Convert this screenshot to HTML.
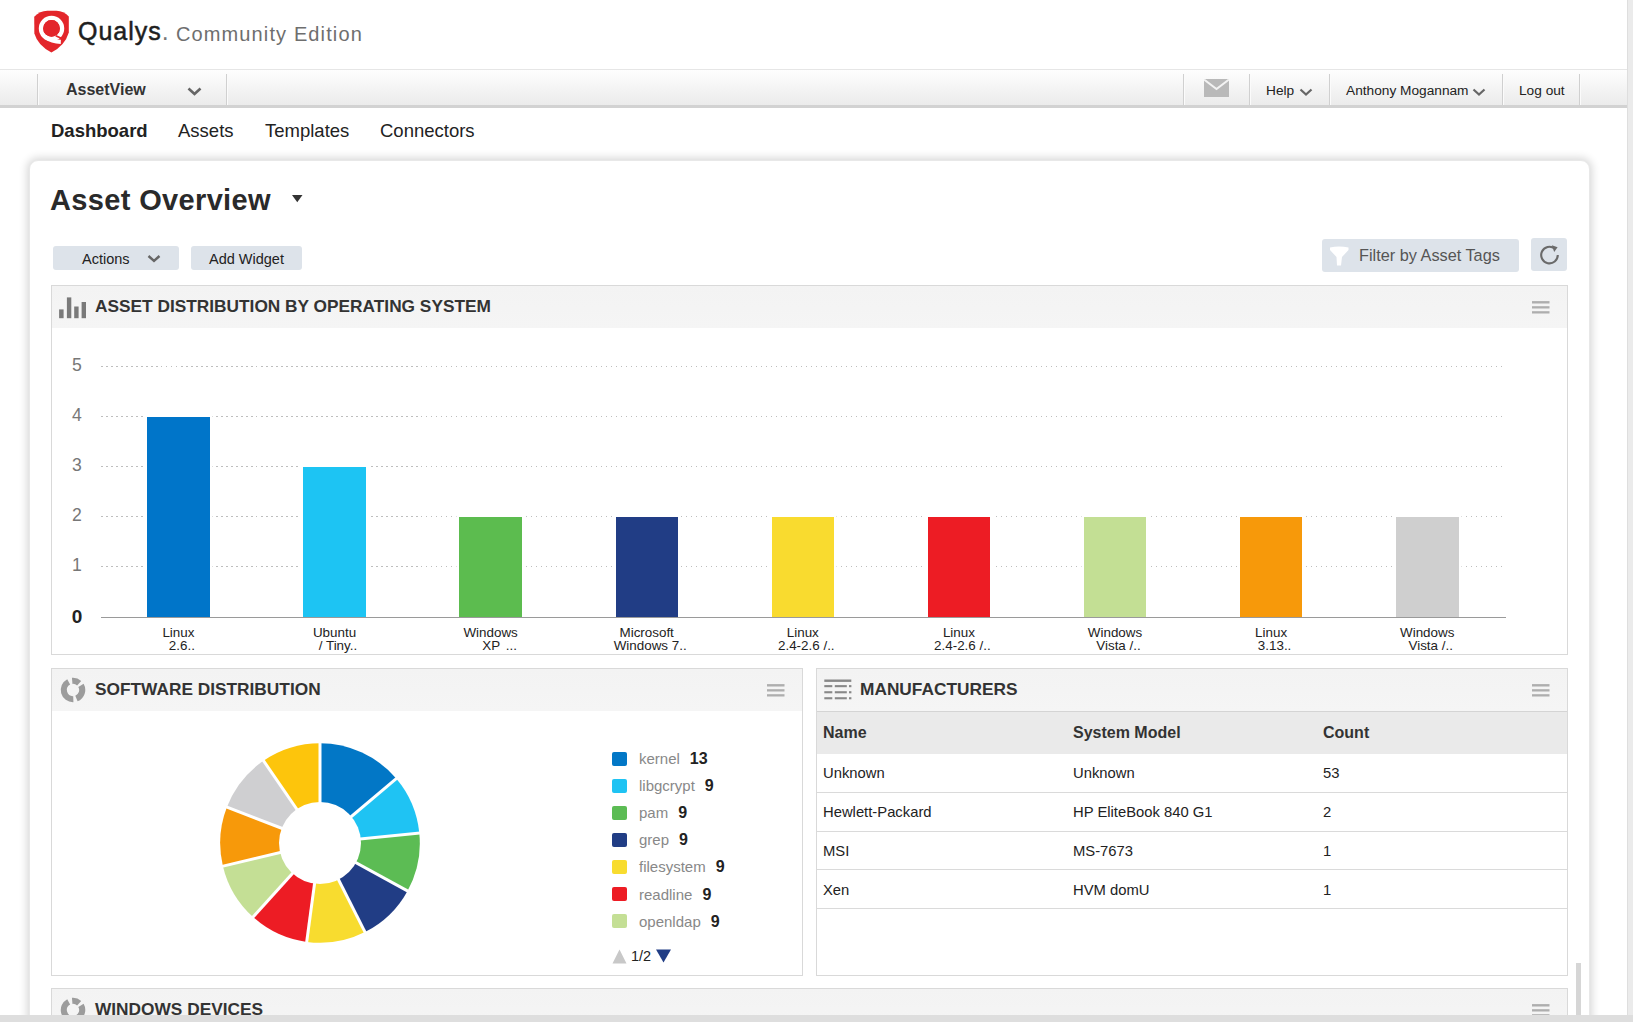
<!DOCTYPE html>
<html><head><meta charset="utf-8">
<style>
*{margin:0;padding:0;box-sizing:border-box}
html,body{width:1633px;height:1022px;overflow:hidden;background:#fff;font-family:"Liberation Sans",sans-serif;color:#333}
.abs{position:absolute}
#vscroll{position:absolute;left:1627px;top:0;width:6px;height:1022px;background:#ebebeb;border-left:1px solid #dedede}
#hscroll{position:absolute;left:0;top:1015px;width:1633px;height:7px;background:#dedede}
.brand{position:absolute;left:78px;top:17px;font-size:25px;color:#1e1e1e;letter-spacing:1px;-webkit-text-stroke:0.5px #1e1e1e;line-height:normal}
.brand span{color:#777;-webkit-text-stroke:0}
.edition{position:absolute;left:176px;top:23px;font-size:20px;color:#6e6e6e;letter-spacing:1.12px}
#nav{position:absolute;left:0;top:69px;width:1627px;height:39px;background:linear-gradient(#fefefe,#ebebeb);border-top:1px solid #e6e6e6;border-bottom:3px solid #d2d2d2}
.sep{position:absolute;top:4px;width:2px;height:31px;border-left:1px solid #d0d0d0;border-right:1px solid #fbfbfb}
.navt{position:absolute;font-size:13.7px;color:#222;top:13px}
.subnav{position:absolute;top:120px;font-size:18.5px;color:#222}
#card{position:absolute;left:29px;top:160px;width:1561px;height:900px;background:#fff;border-radius:9px;box-shadow:0 0 9px 2px rgba(0,0,0,0.16);border:1px solid #e8e8e8}
.panel{position:absolute;border:1px solid #d9d9d9;background:#fff}
.ph{position:absolute;left:0;top:0;right:0;height:42px;background:linear-gradient(#f3f3f3,#f5f5f5)}
.pt{position:absolute;left:43px;top:9.5px;font-size:17.3px;font-weight:bold;color:#333}
.ham{position:absolute;width:17.5px;height:12.5px;border-top:2.3px solid #b0b0b0;border-bottom:2.3px solid #b0b0b0}
.ham:after{content:"";position:absolute;left:0;right:0;top:2.9px;height:2.3px;background:#b0b0b0}
.btn{position:absolute;background:#dde3ea;border-radius:3px;font-size:14.5px;color:#222}
.bar{position:absolute;width:62.6px;box-shadow:0 0 0 2.5px #fff}
.grid{position:absolute;left:101px;width:1405px;height:1px;background:repeating-linear-gradient(90deg,#bebebe 0 1.5px,transparent 1.5px 5px)}
.yl{position:absolute;left:60px;width:34px;text-align:center;font-size:17.6px;color:#777}
.xl{position:absolute;width:120px;text-align:center;font-size:13.4px;line-height:13.5px;color:#222}
.lsq{position:absolute;left:612px;width:15px;height:14px;border-radius:2px}
.lt{position:absolute;left:639px;font-size:15px;color:#888;white-space:nowrap}
.lt b{color:#222;margin-left:10px;font-size:16px}
.th{position:absolute;font-size:16px;font-weight:bold;color:#333;margin-top:1px}
.td{position:absolute;font-size:14.8px;color:#222;margin-top:0.7px}
.rl{position:absolute;left:0;right:0;height:1px;background:#dadada}
</style></head><body>
<div id="vscroll"></div>

<!-- logo -->
<svg class="abs" style="left:28px;top:6px" width="48" height="52" viewBox="0 0 943 1022">
  <path d="M122 210 Q230 100 380 95 L560 95 Q700 100 802 205 L802 520 Q730 770 460 915 Q190 770 125 540 Z" fill="#e3262b"/>
  <circle cx="462" cy="440" r="207" fill="none" stroke="#fff" stroke-width="86"/>
  <path d="M343 610 Q466 700 645 705" fill="none" stroke="#fff" stroke-width="80"/>
  <path d="M545 585 L720 665" stroke="#e3262b" stroke-width="34"/>
  <circle cx="462" cy="440" r="164" fill="#e3262b"/>
</svg>
<div class="brand">Qualys<span>.</span></div>
<div class="edition">Community Edition</div>

<!-- nav -->
<div id="nav">
  <div class="sep" style="left:37px"></div>
  <div class="abs" style="left:66px;top:11px;font-size:16px;font-weight:bold;color:#333">AssetView</div>
  <svg class="abs" style="left:187px;top:17px" width="15" height="10"><path d="M1.5 1.5 L7.5 7 L13.5 1.5" stroke="#666" stroke-width="2.6" fill="none"/></svg>
  <div class="sep" style="left:226px"></div>
  <div class="sep" style="left:1183px"></div>
  <svg class="abs" style="left:1204px;top:9px" width="25" height="19" viewBox="0 0 25 19"><rect x="0" y="0" width="25" height="18" fill="#b9b9b9"/><path d="M0 0.5 L12.5 10 L25 0.5" stroke="#f3f3f3" stroke-width="2" fill="none"/></svg>
  <div class="sep" style="left:1249px"></div>
  <div class="navt" style="left:1266px">Help</div>
  <svg class="abs" style="left:1299px;top:18px" width="15" height="8"><path d="M1.5 1.5 L7 6.5 L12.5 1.5" stroke="#666" stroke-width="2.2" fill="none"/></svg>
  <div class="sep" style="left:1329px"></div>
  <div class="navt" style="left:1346px">Anthony Mogannam</div>
  <svg class="abs" style="left:1472px;top:18px" width="15" height="8"><path d="M1.5 1.5 L7 6.5 L12.5 1.5" stroke="#666" stroke-width="2.2" fill="none"/></svg>
  <div class="sep" style="left:1502px"></div>
  <div class="navt" style="left:1519px">Log out</div>
  <div class="sep" style="left:1579px"></div>
</div>

<div class="subnav" style="left:51px;font-weight:bold">Dashboard</div>
<div class="subnav" style="left:178px">Assets</div>
<div class="subnav" style="left:265px">Templates</div>
<div class="subnav" style="left:380px">Connectors</div>

<div id="card"></div>

<div class="abs" style="left:50px;top:184px;font-size:29px;font-weight:bold;color:#2a2a2a;letter-spacing:0.35px">Asset Overview</div>
<svg class="abs" style="left:292px;top:195px" width="11" height="8"><path d="M0 0 L10.5 0 L5.25 7.2 Z" fill="#333"/></svg>

<div class="btn" style="left:53px;top:246px;width:126px;height:24px"><span class="abs" style="left:29px;top:5px">Actions</span>
  <svg class="abs" style="left:94px;top:9px" width="14" height="8"><path d="M1.5 1 L7 6 L12.5 1" stroke="#666" stroke-width="2.4" fill="none"/></svg></div>
<div class="btn" style="left:191px;top:246px;width:111px;height:24px"><span class="abs" style="left:18px;top:5px">Add Widget</span></div>

<div class="btn" style="left:1322px;top:239px;width:197px;height:33px;font-size:16.3px;color:#555"><span class="abs" style="left:37px;top:7px">Filter by Asset Tags</span>
  <svg class="abs" style="left:7px;top:7px" width="21" height="21" viewBox="0 0 21 21"><path d="M1 1.5 Q10 -0.5 19.5 1.5 L19.5 4 L13 11 L12 19.5 L8 19.5 L7.5 11 L1 4 Z" fill="#fff"/></svg></div>
<div class="btn" style="left:1531px;top:238px;width:36px;height:33px">
  <svg class="abs" style="left:8px;top:6px" width="22" height="22" viewBox="0 0 22 22"><path d="M15.6 4.5 A8.3 8.3 0 1 0 18.8 11" stroke="#6a6a6a" stroke-width="2.1" fill="none"/><path d="M12.8 1.2 L18.6 3.2 L15.2 8 Z" fill="#6a6a6a"/></svg></div>

<!-- panel 1 -->
<div class="panel" style="left:51px;top:285px;width:1517px;height:370px">
  <div class="ph"></div>
  <svg class="abs" style="left:6px;top:11px" width="28" height="22"><rect x="1.1" y="12.4" width="4.5" height="8.8" fill="#7a7a7a"/><rect x="8.9" y="0.4" width="4.4" height="20.8" fill="#7a7a7a"/><rect x="16.2" y="9.5" width="4.4" height="11.7" fill="#7a7a7a"/><rect x="23.6" y="5" width="4.5" height="16.2" fill="#7a7a7a"/></svg>
  <div class="pt">ASSET DISTRIBUTION BY OPERATING SYSTEM</div>
  <svg class="abs" style="left:1480px;top:15px" width="18" height="13"><g fill="#aeaeae"><rect x="0" y="0.1" width="17.5" height="2.4"/><rect x="0" y="5.2" width="17.5" height="2.3"/><rect x="0" y="10.2" width="17.5" height="2.3"/></g></svg>
</div>
<div class="abs" style="left:0;top:0">
<div class="grid" style="top:566.4px"></div>
<div class="yl" style="top:554.9px">1</div>
<div class="grid" style="top:516.3px"></div>
<div class="yl" style="top:504.8px">2</div>
<div class="grid" style="top:466.2px"></div>
<div class="yl" style="top:454.7px">3</div>
<div class="grid" style="top:416.1px"></div>
<div class="yl" style="top:404.6px">4</div>
<div class="grid" style="top:366.0px"></div>
<div class="yl" style="top:354.5px">5</div>

<div class="yl" style="top:605.5px;font-weight:bold;color:#222;font-size:19px">0</div>
<div class="bar" style="left:147.2px;top:416.6px;height:200.4px;background:#0075c9"></div>
<div class="xl" style="left:118.4px;top:625.5px">Linux<br><span style="position:relative;left:3.5px">2.6..</span></div>
<div class="bar" style="left:303.3px;top:466.7px;height:150.3px;background:#1dc4f3"></div>
<div class="xl" style="left:274.5px;top:625.5px">Ubuntu<br><span style="position:relative;left:3.5px">/ Tiny..</span></div>
<div class="bar" style="left:459.4px;top:516.8px;height:100.2px;background:#5cbc4f"></div>
<div class="xl" style="left:430.6px;top:625.5px">Windows<br><span style="position:relative;left:9px">XP&nbsp;<span style="margin-left:2px">...</span></span></div>
<div class="bar" style="left:615.5px;top:516.8px;height:100.2px;background:#213d85"></div>
<div class="xl" style="left:586.7px;top:625.5px">Microsoft<br><span style="position:relative;left:3.5px">Windows 7..</span></div>
<div class="bar" style="left:771.6px;top:516.8px;height:100.2px;background:#f9db2f"></div>
<div class="xl" style="left:742.8px;top:625.5px">Linux<br><span style="position:relative;left:3.5px">2.4-2.6 /..</span></div>
<div class="bar" style="left:927.7px;top:516.8px;height:100.2px;background:#ed1c24"></div>
<div class="xl" style="left:898.9px;top:625.5px">Linux<br><span style="position:relative;left:3.5px">2.4-2.6 /..</span></div>
<div class="bar" style="left:1083.8px;top:516.8px;height:100.2px;background:#c3df94"></div>
<div class="xl" style="left:1055.0px;top:625.5px">Windows<br><span style="position:relative;left:3.5px">Vista /..</span></div>
<div class="bar" style="left:1239.9px;top:516.8px;height:100.2px;background:#f7990a"></div>
<div class="xl" style="left:1211.1px;top:625.5px">Linux<br><span style="position:relative;left:3.5px">3.13..</span></div>
<div class="bar" style="left:1396.0px;top:516.8px;height:100.2px;background:#cfcfcf"></div>
<div class="xl" style="left:1367.2px;top:625.5px">Windows<br><span style="position:relative;left:3.5px">Vista /..</span></div>

<div class="abs" style="left:101px;top:617px;width:1405px;height:1px;background:#9a9a9a"></div>
</div>

<!-- panel 2 -->
<div class="panel" style="left:51px;top:668px;width:752px;height:308px">
  <div class="ph"></div>
  <svg class="abs" style="left:8px;top:8px" width="26" height="26" viewBox="-13 -13 26 26"><g fill="none" stroke="#9c9c9c" stroke-width="6.1"><path d="M-0.80 -9.16 A9.2 9.2 0 0 1 6.16 -6.84"/><path d="M7.97 -4.60 A9.2 9.2 0 0 1 3.45 8.53"/><path d="M0.32 9.19 A9.2 9.2 0 0 1 -4.32 -8.12"/></g></svg>
  <div class="pt">SOFTWARE DISTRIBUTION</div>
  <svg class="abs" style="left:715px;top:15px" width="18" height="13"><g fill="#aeaeae"><rect x="0" y="0.1" width="17.5" height="2.4"/><rect x="0" y="5.2" width="17.5" height="2.3"/><rect x="0" y="10.2" width="17.5" height="2.3"/></g></svg>
</div>
<svg class="abs" style="left:220px;top:743px" width="200" height="200" viewBox="0 0 200 200"><path d="M100 100 L100.00 0.20 A99.8 99.8 0 0 1 176.21 35.57 Z" fill="#0277c6"/><path d="M100 100 L176.21 35.57 A99.8 99.8 0 0 1 199.30 90.01 Z" fill="#1fc3f3"/><path d="M100 100 L199.30 90.01 A99.8 99.8 0 0 1 187.52 147.96 Z" fill="#5cbc54"/><path d="M100 100 L187.52 147.96 A99.8 99.8 0 0 1 145.01 189.07 Z" fill="#213d85"/><path d="M100 100 L145.01 189.07 A99.8 99.8 0 0 1 86.70 198.91 Z" fill="#f8dc2f"/><path d="M100 100 L86.70 198.91 A99.8 99.8 0 0 1 33.06 174.02 Z" fill="#ed1c24"/><path d="M100 100 L33.06 174.02 A99.8 99.8 0 0 1 2.92 123.14 Z" fill="#c4df95"/><path d="M100 100 L2.92 123.14 A99.8 99.8 0 0 1 6.87 64.13 Z" fill="#f7990a"/><path d="M100 100 L6.87 64.13 A99.8 99.8 0 0 1 43.52 17.72 Z" fill="#cfcfd1"/><path d="M100 100 L43.52 17.72 A99.8 99.8 0 0 1 100.00 0.20 Z" fill="#fdc50c"/><line x1="100" y1="100" x2="100.00" y2="-1.80" stroke="#fff" stroke-width="3"/><line x1="100" y1="100" x2="177.74" y2="34.28" stroke="#fff" stroke-width="3"/><line x1="100" y1="100" x2="201.29" y2="89.81" stroke="#fff" stroke-width="3"/><line x1="100" y1="100" x2="189.27" y2="148.92" stroke="#fff" stroke-width="3"/><line x1="100" y1="100" x2="145.91" y2="190.86" stroke="#fff" stroke-width="3"/><line x1="100" y1="100" x2="86.43" y2="200.89" stroke="#fff" stroke-width="3"/><line x1="100" y1="100" x2="31.71" y2="175.50" stroke="#fff" stroke-width="3"/><line x1="100" y1="100" x2="0.97" y2="123.60" stroke="#fff" stroke-width="3"/><line x1="100" y1="100" x2="5.00" y2="63.41" stroke="#fff" stroke-width="3"/><line x1="100" y1="100" x2="42.39" y2="16.07" stroke="#fff" stroke-width="3"/><circle cx="100" cy="100" r="41" fill="#fff"/></svg>
<div class="lsq" style="top:751.5px;background:#0277c6"></div><div class="lt" style="top:750.0px">kernel<b>13</b></div>
<div class="lsq" style="top:778.6px;background:#1fc3f3"></div><div class="lt" style="top:777.1px">libgcrypt<b>9</b></div>
<div class="lsq" style="top:805.7px;background:#5cbc54"></div><div class="lt" style="top:804.2px">pam<b>9</b></div>
<div class="lsq" style="top:832.8px;background:#213d85"></div><div class="lt" style="top:831.3px">grep<b>9</b></div>
<div class="lsq" style="top:859.9px;background:#f8dc2f"></div><div class="lt" style="top:858.4px">filesystem<b>9</b></div>
<div class="lsq" style="top:887.0px;background:#ed1c24"></div><div class="lt" style="top:885.5px">readline<b>9</b></div>
<div class="lsq" style="top:914.1px;background:#c4df95"></div><div class="lt" style="top:912.6px">openldap<b>9</b></div>

<svg class="abs" style="left:612px;top:949px" width="60" height="15">
  <path d="M0.5 14.5 L7.5 0.5 L14.5 14.5 Z" fill="#c8c8c8"/>
  <path d="M44 0.5 L59 0.5 L51.5 13.5 Z" fill="#213d85"/>
</svg>
<div class="abs" style="left:631px;top:948px;font-size:14.5px;color:#222">1/2</div>

<!-- panel 3 -->
<div class="panel" style="left:816px;top:668px;width:752px;height:308px">
  <div class="ph"></div>
  <svg class="abs" style="left:7px;top:9px" width="29" height="22"><g fill="#888"><rect x="0.3" y="1.5" width="27" height="2.4"/><rect x="0.3" y="7.1" width="8" height="2.1"/><rect x="10.8" y="7.1" width="12" height="2.1"/><rect x="25" y="7.1" width="2.4" height="2.1"/><rect x="0.3" y="13.2" width="8" height="2.1"/><rect x="10.8" y="13.2" width="12" height="2.1"/><rect x="25" y="13.2" width="2.4" height="2.1"/><rect x="0.3" y="19.2" width="8" height="2.1"/><rect x="10.8" y="19.2" width="12" height="2.1"/><rect x="25" y="19.2" width="2.4" height="2.1"/></g></svg>
  <div class="pt">MANUFACTURERS</div>
  <svg class="abs" style="left:715px;top:15px" width="18" height="13"><g fill="#aeaeae"><rect x="0" y="0.1" width="17.5" height="2.4"/><rect x="0" y="5.2" width="17.5" height="2.3"/><rect x="0" y="10.2" width="17.5" height="2.3"/></g></svg>
  <div class="abs" style="left:0;top:42px;right:0;height:43px;background:#eaeaea;border-top:1px solid #d4d4d4"></div>
  <div class="th" style="left:6px;top:54px">Name</div>
  <div class="th" style="left:256px;top:54px">System Model</div>
  <div class="th" style="left:506px;top:54px">Count</div>
  <div class="rl" style="top:122.5px"></div>
  <div class="rl" style="top:161.5px"></div>
  <div class="rl" style="top:200px"></div>
  <div class="rl" style="top:238.5px"></div>
  <div class="td" style="left:6px;top:95px">Unknown</div><div class="td" style="left:256px;top:95px">Unknown</div><div class="td" style="left:506px;top:95px">53</div>
  <div class="td" style="left:6px;top:134px">Hewlett-Packard</div><div class="td" style="left:256px;top:134px">HP EliteBook 840 G1</div><div class="td" style="left:506px;top:134px">2</div>
  <div class="td" style="left:6px;top:173px">MSI</div><div class="td" style="left:256px;top:173px">MS-7673</div><div class="td" style="left:506px;top:173px">1</div>
  <div class="td" style="left:6px;top:212px">Xen</div><div class="td" style="left:256px;top:212px">HVM domU</div><div class="td" style="left:506px;top:212px">1</div>
</div>

<!-- panel 4 -->
<div class="panel" style="left:51px;top:988px;width:1517px;height:60px">
  <div class="ph"></div>
  <svg class="abs" style="left:8px;top:8px" width="26" height="26" viewBox="-13 -13 26 26"><g fill="none" stroke="#9c9c9c" stroke-width="6.1"><path d="M-0.80 -9.16 A9.2 9.2 0 0 1 6.16 -6.84"/><path d="M7.97 -4.60 A9.2 9.2 0 0 1 3.45 8.53"/><path d="M0.32 9.19 A9.2 9.2 0 0 1 -4.32 -8.12"/></g></svg>
  <div class="pt">WINDOWS DEVICES</div>
  <svg class="abs" style="left:1480px;top:15px" width="18" height="13"><g fill="#aeaeae"><rect x="0" y="0.1" width="17.5" height="2.4"/><rect x="0" y="5.2" width="17.5" height="2.3"/><rect x="0" y="10.2" width="17.5" height="2.3"/></g></svg>
</div>
<div class="abs" style="left:1576px;top:963px;width:5px;height:52px;background:#d6d6d6"></div>

<div id="hscroll"></div>
</body></html>
